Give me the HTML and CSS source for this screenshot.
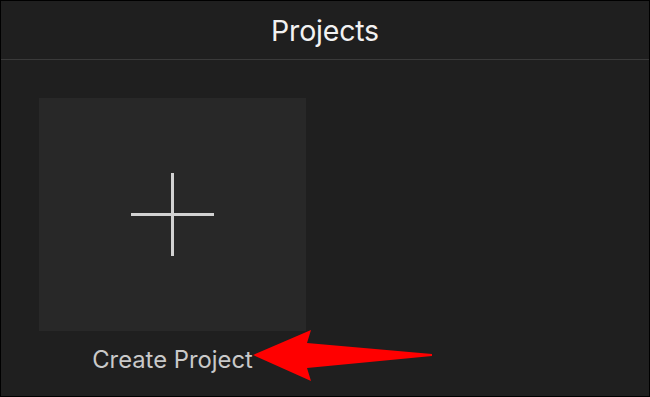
FILE: index.html
```html
<!DOCTYPE html>
<html>
<head>
<meta charset="utf-8">
<link rel="stylesheet" href="styles.css">
</head>
<body>
<div class="frame">
  <header class="topbar">
    <h1 class="title">Projects</h1>
  </header>
  <main class="content">
    <div class="project">
      <div class="tile">
        <svg class="plus" width="83" height="83" viewBox="0 0 83 83">
          <rect x="40" y="0" width="3" height="83" fill="#d2d2d2"/>
          <rect x="0" y="40" width="83" height="3" fill="#d2d2d2"/>
        </svg>
      </div>
      <div class="label">Create Project</div>
    </div>
  </main>
  <svg class="arrow" width="650" height="397" viewBox="0 0 650 397">
    <polygon points="253,355 311,330 307,343 432,354 432,356 307,368 311,381" fill="#ff0000"/>
  </svg>
</div>
</body>
</html>
```

FILE: styles.css
```css
html, body {
  margin: 0;
  padding: 0;
  background: #1f1f1f;
}
.frame {
  position: relative;
  width: 650px;
  height: 397px;
  box-sizing: border-box;
  border: 1px solid #000;
  background: #1f1f1f;
  font-family: Inter, "Liberation Sans", sans-serif;
  overflow: hidden;
}
.topbar {
  height: 58px;
  border-bottom: 1px solid #3a3a3a;
  display: flex;
  align-items: center;
  justify-content: center;
}
.title {
  margin: 0;
  padding-top: 1px;
  font-size: 28.5px;
  font-weight: 400;
  color: #f2f2f2;
  letter-spacing: -0.2px;
}
.content {
  padding: 38px 0 0 38px;
}
.project {
  width: 267px;
  display: flex;
  flex-direction: column;
  align-items: center;
}
.tile {
  width: 267px;
  height: 233px;
  background: #282828;
  display: flex;
  align-items: center;
  justify-content: center;
}
.label {
  margin-top: 15px;
  font-size: 23.8px;
  color: #c9c9c9;
  line-height: 28px;
}
.arrow {
  position: absolute;
  left: -1px;
  top: -1px;
}
```
